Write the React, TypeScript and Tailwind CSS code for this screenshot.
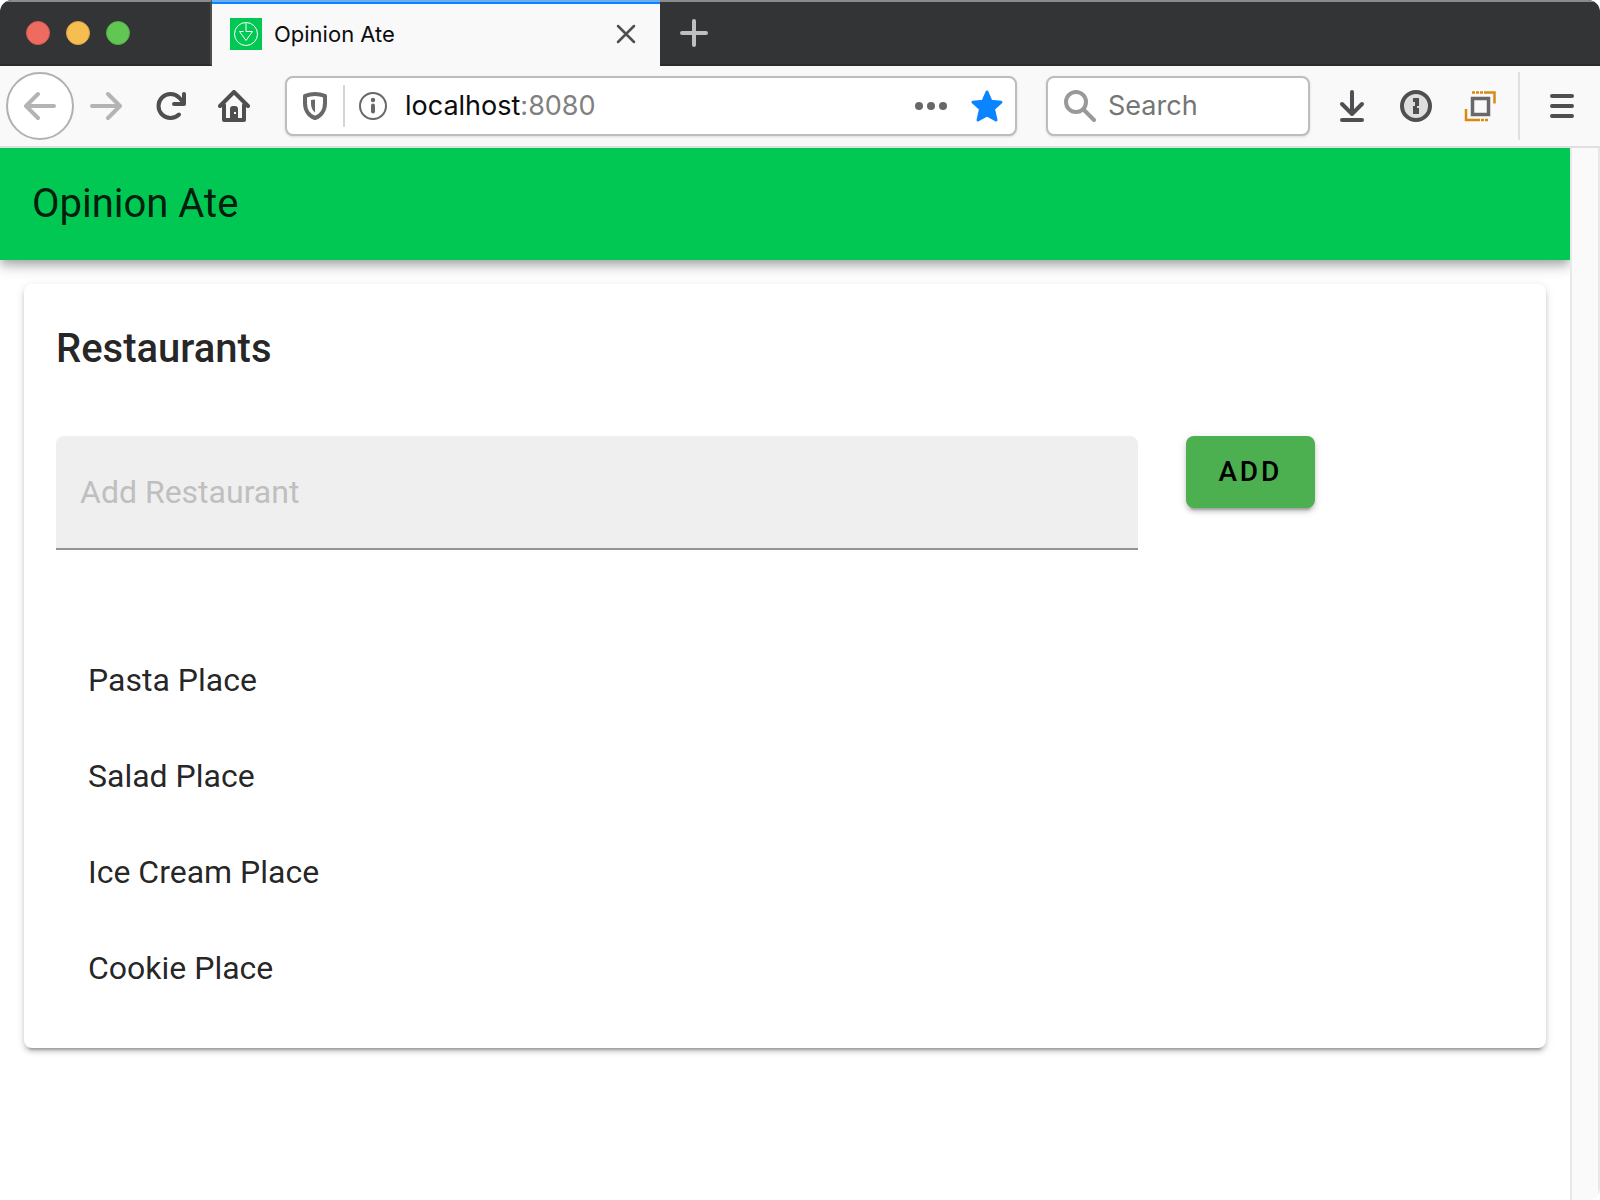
import { useState, type FormEvent, type ReactNode } from 'react'

const INITIAL_RESTAURANTS = ['Pasta Place', 'Salad Place', 'Ice Cream Place', 'Cookie Place']

interface ToolButtonProps {
  label: string
  className?: string
  children: ReactNode
}

function ToolButton({ label, className = 'text-[#4f4f52]', children }: ToolButtonProps) {
  return (
    <button type="button" aria-label={label} className={`shrink-0 ${className}`}>
      <svg
        className="size-8"
        viewBox="0 0 32 32"
        fill="none"
        stroke="currentColor"
        strokeWidth={4}
        strokeLinecap="round"
        strokeLinejoin="round"
      >
        {children}
      </svg>
    </button>
  )
}

function TabStrip() {
  return (
    <div className="flex h-[66px] bg-[#333436]">
      <div className="w-[212px] shrink-0 flex items-center gap-4 pl-[26px] border-t-2 border-t-[#8a8b8c] border-b-2 border-b-[#2b2b2d] border-r-2 border-r-[#4c4d4f]">
        <button type="button" aria-label="Close window" className="size-6 rounded-full bg-[#ed6b5f] border border-[#d95a4f]" />
        <button type="button" aria-label="Minimize window" className="size-6 rounded-full bg-[#f6be50] border border-[#dfa63f]" />
        <button type="button" aria-label="Zoom window" className="size-6 rounded-full bg-[#62c655] border border-[#52ae43]" />
      </div>

      <div className="w-[448px] shrink-0 flex items-center pl-[18px] pr-6 bg-[#f9f9fa] border-t-2 border-[#6aaef2] shadow-[inset_0_2px_0_#0a84ff]">
        <svg className="size-8 shrink-0" viewBox="0 0 32 32" fill="none" stroke="#ffffff">
          <rect width="32" height="32" fill="#00c853" stroke="none" />
          <circle cx="16" cy="16" r="11.5" />
          <path d="M16 4.5v9h6.5L16 22.5l-6.5-9h4" />
        </svg>
        <span className="flex-1 ml-3 text-[22px] text-[#0c0c0d]">Opinion Ate</span>
        <button type="button" aria-label="Close tab">
          <svg className="size-5" viewBox="0 0 20 20" stroke="#4f4f52" strokeWidth="2.5" strokeLinecap="round">
            <path d="M2 2l16 16M18 2L2 18" />
          </svg>
        </button>
      </div>

      <div className="flex-1 flex items-center pl-5 border-t-2 border-t-[#8a8b8c] border-b-2 border-b-[#2b2b2d]">
        <button type="button" aria-label="New tab">
          <svg className="size-7" viewBox="0 0 28 28" stroke="#bfbfc0" strokeWidth="4" strokeLinecap="round">
            <path d="M14 2v24M2 14h24" />
          </svg>
        </button>
      </div>
    </div>
  )
}

function AddressBar() {
  return (
    <div className="flex-1 h-[60px] min-w-0 flex items-center ml-[35px] px-3 rounded-lg bg-white border-2 border-[#bdbdbd] shadow-sm">
      <ToolButton label="Tracking protection" className="text-[#68686a]">
        <path d="M16 4c3.500 0 7 .8 10 1.800V13c0 7.500-4 13-10 15C10 26 6 20.500 6 13V5.800C9 4.800 12.500 4 16 4z" />
        <path d="M16 9.500v13c-2.600-2-4-5.200-4-9V10z" fill="currentColor" stroke="none" />
      </ToolButton>
      <div className="w-[2px] h-[42px] ml-3 shrink-0 bg-[#d4d4d4]" />
      <ToolButton label="Site information" className="ml-3 text-[#68686a]">
        <circle cx="16" cy="16" r="13" strokeWidth={2} />
        <path d="M16 15.5v6" />
        <circle cx="16" cy="10" r="2.2" fill="currentColor" stroke="none" />
      </ToolButton>
      <div
        role="textbox"
        aria-label="Address"
        contentEditable
        suppressContentEditableWarning
        className="flex-1 min-w-0 ml-4 text-[27px] text-[#0c0c0d] outline-none"
      >
        localhost<span className="text-[#808080]">:8080</span>
      </div>
      <ToolButton label="Page actions" className="text-[#68686a]">
        <g fill="currentColor" stroke="none">
          <circle cx="4" cy="16" r="4" />
          <circle cx="16" cy="16" r="4" />
          <circle cx="28" cy="16" r="4" />
        </g>
      </ToolButton>
      <ToolButton label="Bookmark this page" className="ml-6 text-[#0a84ff]">
        <path
          d="M16 2l4 9.300 10 .9-7.500 6.700L25 30l-9-5-9 5 2.500-11.100L2 12.200l10-.9z"
          fill="currentColor"
          strokeWidth={3}
        />
      </ToolButton>
    </div>
  )
}

function BrowserToolbar() {
  return (
    <div className="flex items-center h-[82px] pl-[6px] pr-[22px] bg-[#f9f9fa] border-b-2 border-[#e0e0e1]">
      <ToolButton
        label="Back"
        className="size-[68px] flex items-center justify-center rounded-full bg-white border-2 border-[#b1b1b1] text-[#b4b4b5]"
      >
        <path d="M30 16H2M14 4L2 16l12 12" />
      </ToolButton>
      <ToolButton label="Forward" className="ml-4 text-[#b4b4b5]">
        <path d="M2 16h28M18 4l12 12-12 12" />
      </ToolButton>
      <ToolButton label="Reload" className="ml-8 text-[#4f4f52]">
        <path d="M25 24.500A12 12 0 1 1 25 7.500L29 12" />
        <path d="M30 4v10H20" />
      </ToolButton>
      <ToolButton label="Home" className="ml-8 text-[#4f4f52]">
        <path d="M2 16L16 2l14 14M6 15v15h20V15" />
        <path d="M12 30V19q0-3 3-3h2q3 0 3 3v11zM16 22v2h2v-2z" fill="currentColor" fillRule="evenodd" stroke="none" />
      </ToolButton>

      <AddressBar />

      <label className="w-[264px] h-[60px] shrink-0 flex items-center ml-[29px] pl-4 rounded-lg bg-white border-2 border-[#bdbdbd] shadow-sm">
        <svg className="size-8 shrink-0" viewBox="0 0 32 32" fill="none" stroke="#999999" strokeWidth="4" strokeLinecap="round">
          <circle cx="12" cy="12" r="10" />
          <path d="M20 20l10 10" />
        </svg>
        <input
          type="text"
          aria-label="Search"
          placeholder="Search"
          className="w-full min-w-0 ml-3 text-[27px] placeholder:text-[#757575] outline-none"
        />
      </label>

      <div className="flex gap-8 ml-[26px]">
        <ToolButton label="Downloads">
          <path d="M16 2v22M6 14l10 10 10-10M6 30h20" />
        </ToolButton>
        <ToolButton label="1Password">
          <circle cx="16" cy="16" r="14" fill="#dededf" />
          <path d="M13 8h6v8h-2v2h2v6h-6v-8h2v-4h-2z" fill="currentColor" stroke="none" />
        </ToolButton>
        <ToolButton label="Responsive view" className="text-[#68686a]">
          <rect x="8.500" y="8.500" width="16" height="16" fill="#f9f9fa" strokeWidth={3.5} strokeLinejoin="miter" />
          <g stroke="#d78a0c" strokeWidth={2.5} strokeLinecap="butt" strokeLinejoin="miter">
            <path d="M20 2.500h10.500v11M2 19v11h11" />
            <path d="M8 2.500h12M13 30h11" strokeDasharray="3 1" />
          </g>
        </ToolButton>
      </div>
      <div className="w-[2px] h-[68px] ml-[22px] mr-[26px] shrink-0 bg-[#e0e0e1]" />
      <ToolButton label="Open menu">
        <path d="M6 6h20M6 16h20M6 26h20" />
      </ToolButton>
    </div>
  )
}

export default function App() {
  const [restaurants, setRestaurants] = useState(INITIAL_RESTAURANTS)
  const [name, setName] = useState('')

  const handleAdd = (e: FormEvent) => {
    e.preventDefault()
    const trimmed = name.trim()
    if (!trimmed) return
    setRestaurants([...restaurants, trimmed])
    setName('')
  }

  return (
    <div className="min-h-screen flex flex-col bg-white rounded-t-xl rounded-br-xl overflow-hidden font-['Inter',sans-serif]">
      <TabStrip />
      <BrowserToolbar />

      <div className="flex-1 flex font-['Roboto',sans-serif]">
        <div className="flex-1 min-w-0 overflow-hidden">
          <header className="h-28 flex items-center px-8 bg-[#00c853] shadow-[0_4px_8px_-2px_rgba(0,0,0,0.2),0_8px_10px_0_rgba(0,0,0,0.14),0_2px_20px_0_rgba(0,0,0,0.12)]">
            <div className="text-[40px] text-black/87">Opinion Ate</div>
          </header>

          <main className="p-6">
            <section className="p-8 rounded-lg bg-white text-black/87 shadow-[0_6px_2px_-4px_rgba(0,0,0,0.2),0_4px_4px_0_rgba(0,0,0,0.14),0_2px_10px_0_rgba(0,0,0,0.12)]">
              <h1 className="text-[40px] leading-[66px] font-medium">Restaurants</h1>

              <form onSubmit={handleAdd} className="grid grid-cols-12 gap-12 items-start mt-[54px]">
                <input
                  type="text"
                  aria-label="Add Restaurant"
                  placeholder="Add Restaurant"
                  value={name}
                  onChange={e => setName(e.target.value)}
                  className="col-span-9 h-[114px] px-6 rounded-t-lg bg-[#efefef] border-b-2 border-[#949494] text-[32px] placeholder:text-[#bfbfbf] outline-none"
                />
                <button
                  type="submit"
                  className="col-span-3 justify-self-start h-[72px] px-[33px] rounded-lg bg-[#4caf50] text-[28px] font-medium tracking-widest text-black shadow-[0_6px_2px_-4px_rgba(0,0,0,0.2),0_4px_4px_0_rgba(0,0,0,0.14),0_2px_10px_0_rgba(0,0,0,0.12)]"
                >
                  ADD
                </button>
              </form>

              <ul className="mt-[82px]">
                {restaurants.map(restaurant => (
                  <li key={restaurant} className="h-24 flex items-center px-8 text-[32px]">
                    {restaurant}
                  </li>
                ))}
              </ul>
            </section>
          </main>
        </div>

        {/* scrollbar track */}
        <div className="w-[30px] shrink-0 bg-[#fafafa] border-x-2 border-[#e8e8e8]" />
      </div>
    </div>
  )
}
